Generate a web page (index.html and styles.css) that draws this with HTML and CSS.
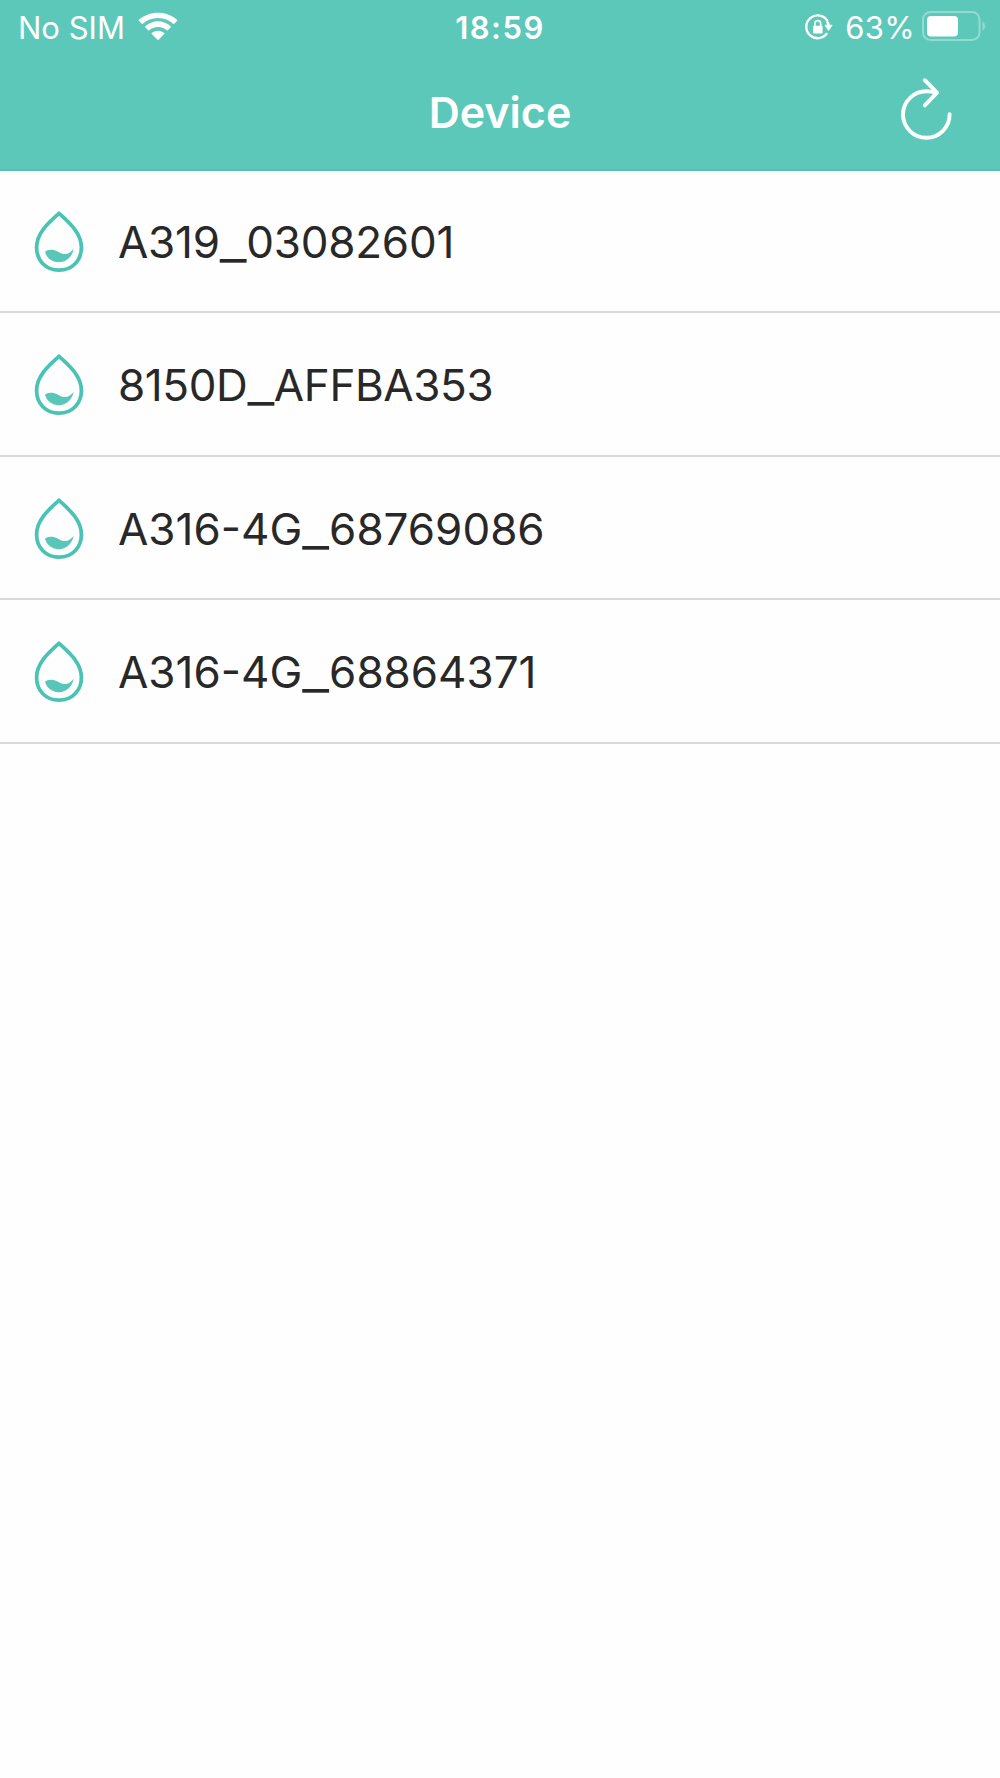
FILE: index.html
```html
<!DOCTYPE html>
<html lang="en">
<head>
<meta charset="utf-8">
<title>Device</title>
<link rel="stylesheet" href="styles.css">
</head>
<body>
<header class="header">
  <div class="status">
    <div class="status-left">
      <span class="carrier">No SIM</span>
      <svg class="wifi" width="42" height="32" viewBox="0 0 42 32" fill="#fff">
        <path d="M1.4 9.3C12 -.9 30 -.9 40.6 9.3L36.8 13.2C28 5 14 5 5.2 13.2Z"/>
        <path d="M7.8 15.8C15.5 8.4 26.5 8.4 34.2 15.8L30.3 19.8C25 14.8 17 14.8 11.7 19.8Z"/>
        <path d="M14.3 22.4C18.1 18.7 23.9 18.7 27.7 22.4L21 29.2Z"/>
      </svg>
    </div>
    <span class="time">18:59</span>
    <div class="status-right">
      <svg class="lock" width="30" height="28" viewBox="0 0 30 28">
        <path d="M23.6 8.2A11.4 11.4 0 1 0 23.1 20.2" fill="none" stroke="#fff" stroke-width="2.4"/>
        <path d="M21 12.2H28.2L24.6 17.4Z" fill="#fff" stroke="#fff" stroke-width=".8" stroke-linejoin="round"/>
        <path d="M23 8.5Q24.6 10.5 24.7 13" fill="none" stroke="#fff" stroke-width="2.4"/>
        <rect x="9" y="12.8" width="9.6" height="7.6" rx="1.2" fill="#fff"/>
        <path d="M10.9 13V10.9A2.9 3.2 0 0 1 16.7 10.9V13" fill="none" stroke="#fff" stroke-width="1.7"/>
      </svg>
      <span class="percent">63%</span>
      <svg class="battery" width="66" height="32" viewBox="0 0 66 32">
        <rect x="2" y="2" width="56.5" height="28" rx="7.5" fill="none" stroke="#93dbd1" stroke-width="2"/>
        <rect x="6" y="6" width="31" height="20.5" rx="4" fill="#fff"/>
        <path d="M61.5 11.3Q64 12.8 64 16T61.5 20.7Z" fill="#93dbd1"/>
      </svg>
    </div>
  </div>
  <div class="nav">
    <h1 class="title">Device</h1>
    <svg class="refresh" width="54" height="64" viewBox="0 0 54 64" fill="none" stroke="#fff" stroke-width="3.9" stroke-linecap="round" stroke-linejoin="round">
      <path d="M49.6 37.2A23.3 23.3 0 1 1 26.3 14.2Q31 14.2 36.5 15.7"/>
      <path d="M24.8 3.2L37 15.6L24.8 28.4"/>
    </svg>
  </div>
</header>
<svg class="symbols" width="0" height="0">
  <symbol id="drop" viewBox="0 0 50 62">
    <path d="M25 2.3C18 9.1 2.6 20.5 2.6 36.4C2.6 49.6 11.8 59.2 25 59.2S47.4 49.6 47.4 36.4C47.4 20.5 32 9.1 25 2.3Z" fill="none" stroke="#49c3b3" stroke-width="3.7" stroke-linejoin="round"/>
    <path d="M11 40.8C13 38.4 19 37.8 23.5 40.5C30 44.5 35 44 39.7 37.8C38 46 32.5 51.2 24.5 51.2C17.5 51.2 12.5 46.5 11 40.8Z" fill="#58c6b8"/>
  </symbol>
</svg>
<main class="list">
  <div class="row"><svg class="drop"><use href="#drop"/></svg><span class="name snug">A319<span class="bar">_</span>03082601</span></div>
  <div class="row"><svg class="drop"><use href="#drop"/></svg><span class="name tight">8150D<span class="bar">_</span>AFFBA353</span></div>
  <div class="row"><svg class="drop"><use href="#drop"/></svg><span class="name">A316-4G<span class="bar">_</span>68769086</span></div>
  <div class="row"><svg class="drop"><use href="#drop"/></svg><span class="name">A316-4G<span class="bar">_</span>68864371</span></div>
</main>
</body>
</html>
```
FILE: styles.css
```css
* { box-sizing: border-box; }
body {
  margin: 0;
  min-height: 1778px;
  background: #fefefe;
  font-family: Inter, "Liberation Sans", sans-serif;
  color: #282828;
}
.header {
  height: 171px;
  background: #5cc8b9;
  border-bottom: 2px solid #56c1b3;
  color: #fff;
}
.status {
  display: grid;
  grid-template-columns: 1fr auto 1fr;
  height: 54px;
  align-items: center;
  font-size: 31px;
  line-height: 54px;
}
.status-left, .status-right { display: flex; align-items: center; }
.status-left { padding-left: 18px; gap: 12px; }
.status-right { justify-content: flex-end; padding-right: 13px; }
.carrier, .time, .percent { padding-top: 2px; line-height: 52px; }
.time { font-weight: 600; letter-spacing: 1.5px; }
.percent { margin: 0 6px 0 11px; letter-spacing: .3px; }
.battery { margin-bottom: 2px; }
.nav {
  display: grid;
  grid-template-columns: 1fr auto 1fr;
  height: 115px;
  align-items: center;
}
.title {
  grid-column: 2;
  margin: 0;
  font-size: 43px;
  font-weight: 600;
  line-height: 60px;
}
.refresh { justify-self: end; margin: 0 46px 6px 0; }
.symbols { display: block; }
.list { display: flex; flex-direction: column; }
.row {
  display: flex;
  align-items: center;
  height: 143.6px;
  padding: 3px 0 0 34px;
  border-bottom: 2px solid #d9d9d9;
}
.row:first-child { height: 142px; padding-top: 2px; }
.drop { width: 50px; height: 62px; flex: none; }
.name { margin-left: 34px; font-size: 44px; line-height: 60px; }
.snug { letter-spacing: -.25px; }
.tight { letter-spacing: -.4px; }
.bar { font-size: 60px; font-weight: 300; line-height: 0; vertical-align: -1px; }
```
